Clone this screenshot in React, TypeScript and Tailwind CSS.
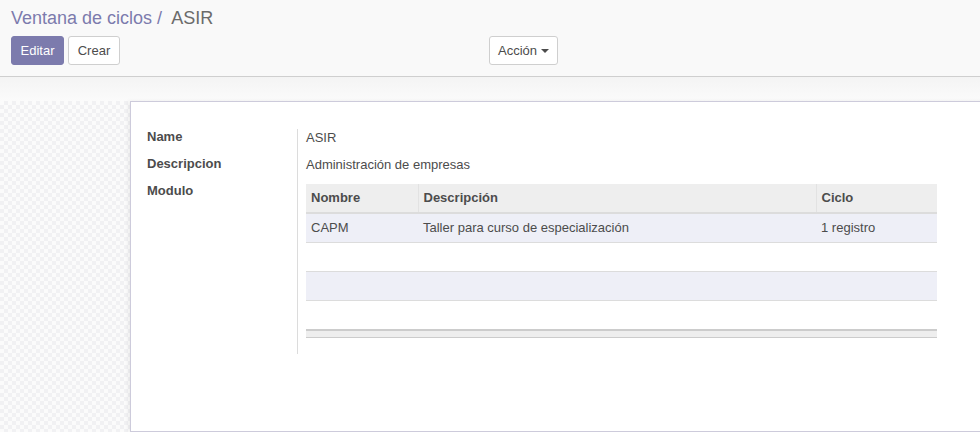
const rows = [
  { nombre: "CAPM", descripcion: "Taller para curso de especialización", ciclo: "1 registro" },
];

export default function App() {
  return (
    <div className="w-[980px] h-[432px] overflow-hidden bg-white text-[13px] text-[#4c4c4c] font-['Liberation_Sans',Arial,sans-serif]">
      {/* control panel */}
      <div className="h-[77px] bg-[#f9f9f9] border-b border-[#cfcfcf]">
        <div className="h-[36px] pl-[11px] flex items-center text-[18px] leading-none">
          <span className="text-[#7c7bad]">Ventana de ciclos</span>
          <span className="text-[#7c7bad] ml-[5px]">/</span>
          <span className="text-[#6b6b6b] ml-[9px]">ASIR</span>
        </div>
        <div className="grid grid-cols-2">
          <div className="pl-[11px] flex gap-[4px]">
            <button className="h-[29px] w-[53px] rounded-[3px] bg-[#7c7bad] text-white text-[13px] border border-[#7c7bad]">
              Editar
            </button>
            <button className="h-[29px] w-[52px] rounded-[3px] bg-white text-[#4c4c4c] text-[13px] border border-[#cfcfcf]">
              Crear
            </button>
          </div>
          <div className="-ml-px">
            <button className="h-[29px] w-[69px] rounded-[3px] bg-white text-[#4c4c4c] text-[13px] border border-[#cfcfcf] flex items-center justify-center gap-[4px]">
              Acción
              <span className="w-0 h-0 border-x-[4px] border-x-transparent border-t-[4px] border-t-[#4c4c4c] mt-[1px]" />
            </button>
          </div>
        </div>
      </div>

      {/* form background */}
      <div className="h-[24px] bg-gradient-to-b from-[#f4f4f4] to-[#fbfbfb]" />
      <div className="h-[331px] bg-[repeating-conic-gradient(#f1f1f3_0_25%,#fbfbfb_0_50%)] bg-[length:8px_8px]">
        <div className="ml-[130px] w-[880px] h-[331px] bg-white border border-[#cdcbdb] shadow-[-2px_0_4px_rgba(0,0,0,0.06)] pt-[27px] pl-[16px] flex">
          <div className="w-[150px] flex flex-col gap-[11px] font-bold leading-[16px]">
            <div>Name</div>
            <div>Descripcion</div>
            <div>Modulo</div>
          </div>
          <div className="h-[225px] border-l border-[#dcdcdc] pl-[8px]">
            <div className="leading-[16px] pt-px">ASIR</div>
            <div className="leading-[16px] mt-[11px]">Administración de empresas</div>
            <table className="mt-[11px] w-[631px] border-collapse table-fixed">
              <colgroup>
                <col className="w-[112px]" />
                <col className="w-[398px]" />
                <col className="w-[121px]" />
              </colgroup>
              <thead>
                <tr className="h-[29px] bg-[#eeeeee] border-b-2 border-[#dcdcdc] text-left font-bold">
                  <th className="pl-[5px] font-bold">Nombre</th>
                  <th className="pl-[5px] font-bold border-l border-[#e2e2e2]">Descripción</th>
                  <th className="pl-[5px] font-bold border-l border-[#e2e2e2]">Ciclo</th>
                </tr>
              </thead>
              <tbody>
                {rows.map((r) => (
                  <tr key={r.nombre} className="h-[29px] bg-[#eeeff7] border-b border-[#dcdcdc]">
                    <td className="pl-[5px]">{r.nombre}</td>
                    <td className="pl-[5px]">{r.descripcion}</td>
                    <td className="pl-[5px]">{r.ciclo}</td>
                  </tr>
                ))}
                <tr className="h-[29px] bg-white border-b border-[#dcdcdc]">
                  <td colSpan={3} />
                </tr>
                <tr className="h-[29px] bg-[#eeeff7] border-b border-[#dcdcdc]">
                  <td colSpan={3} />
                </tr>
                <tr className="h-[30px] bg-white">
                  <td colSpan={3} />
                </tr>
              </tbody>
              <tfoot>
                <tr className="h-[7px] bg-[#eeeeee] border-t-2 border-b border-[#cccccc]">
                  <td colSpan={3} />
                </tr>
              </tfoot>
            </table>
          </div>
        </div>
      </div>
    </div>
  );
}
